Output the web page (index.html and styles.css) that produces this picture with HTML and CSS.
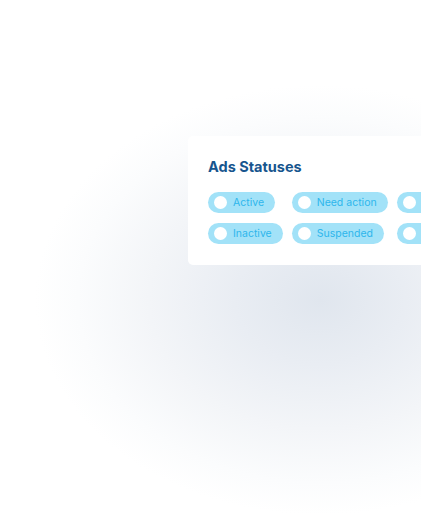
FILE: index.html
```html
<!DOCTYPE html>
<html>
<head>
<meta charset="utf-8">
<link rel="stylesheet" href="styles.css">
</head>
<body>
<div class="stage">
  <div class="card">
    <h2 class="title">Ads Statuses</h2>
    <div class="grid">
      <span class="pill"><span class="dot"></span>Active</span>
      <span class="pill"><span class="dot"></span>Need action</span>
      <span class="pill"><span class="dot"></span>Archived</span>
      <span class="pill"><span class="dot"></span>Inactive</span>
      <span class="pill"><span class="dot"></span>Suspended</span>
      <span class="pill"><span class="dot"></span>All</span>
    </div>
  </div>
</div>
</body>
</html>
```
FILE: styles.css
```css
html, body {
  margin: 0;
  padding: 0;
  width: 421px;
  height: 516px;
  overflow: hidden;
  background: #fff;
}
.stage {
  width: 421px;
  height: 516px;
  overflow: hidden;
  padding-top: 136px;
  padding-left: 188px;
  box-sizing: border-box;
  background: radial-gradient(ellipse 285px 215px at 320px 300px, #e0e6ee 0%, #e9edf3 30%, #f3f5f8 60%, #fbfcfd 85%, #ffffff 100%);
  font-family: "Inter", "DejaVu Sans", sans-serif;
}
.card {
  width: 420px;
  background: #fff;
  border-radius: 5px;
  padding: 21px 20px 21px 20px;
  box-sizing: border-box;
}
.title {
  margin: 0 0 15px 0;
  font-size: 14.5px;
  line-height: 20px;
  font-weight: 700;
  color: #17558e;
}
.grid {
  display: grid;
  grid-template-columns: auto auto auto;
  justify-content: start;
  column-gap: 9px;
  row-gap: 10px;
}
.pill {
  justify-self: start;
  display: inline-flex;
  align-items: center;
  height: 21px;
  padding: 0 11px 0 6px;
  gap: 6px;
  border-radius: 11px;
  background: #a2e2f8;
  color: #2eb6ec;
  font-size: 10.5px;
  white-space: nowrap;
}
.dot {
  width: 13px;
  height: 13px;
  border-radius: 50%;
  background: #fff;
  flex: none;
}
```
